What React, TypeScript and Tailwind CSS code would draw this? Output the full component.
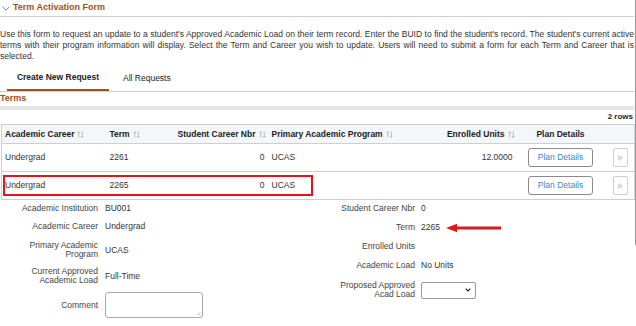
import React from 'react';

const brown = 'text-[#a0501e]';

const SortIcon: React.FC = () => (
  <svg width="7" height="7" viewBox="0 0 8 8" className="ml-[3px] inline-block text-[#a8a8a8]" fill="none" stroke="currentColor" strokeWidth="0.9">
    <path d="M2 7.5V0.8M0.6 2.2L2 0.8L3.4 2.2" />
    <path d="M6 0.5V7.2M4.6 5.8L6 7.2L7.4 5.8" />
  </svg>
);

const PlanButtons: React.FC = () => (
  <>
    <td className="text-center align-middle">
      <button className="h-[19px] w-[65px] rounded-[3px] border border-[#8a8a8a] bg-white text-[8.5px] text-[#3a86c8]">
        Plan Details
      </button>
    </td>
    <td className="align-middle">
      <button className="ml-[9px] flex h-[19px] w-[15px] items-center justify-center rounded-[2px] border border-[#cfcfcf] bg-white">
        <svg width="5" height="6" viewBox="0 0 5 6" fill="none" stroke="#b0b0b0" strokeWidth="0.8">
          <path d="M0.8 0.7L4.2 3L0.8 5.3Z" />
        </svg>
      </button>
    </td>
  </>
);

const App: React.FC = () => {
  const rows = [
    { career: 'Undergrad', term: '2261', nbr: '0', program: 'UCAS', units: '12.0000' },
    { career: 'Undergrad', term: '2265', nbr: '0', program: 'UCAS', units: '' },
  ];

  return (
    <div
      className="relative h-[326px] w-[636px] overflow-hidden bg-white text-[8.5px] text-[#333]"
      style={{ fontFamily: '"Liberation Sans", Arial, sans-serif' }}
    >
      {/* scroll edge */}
      <div className="absolute right-0 top-0 h-[245px] w-px bg-[#9a9a9a]" />

      <div className="w-[634px]">
        {/* header */}
        <div className="flex h-[17px] items-center border-b border-[#cfcfcf]">
          <svg width="8" height="5" viewBox="0 0 8 5" className="ml-[2px] mr-[3px]" fill="none" stroke="#777" strokeWidth="0.9">
            <path d="M0.5 0.7L4 4.2L7.5 0.7" />
          </svg>
          <span className={`text-[9px] font-bold ${brown}`}>Term Activation Form</span>
        </div>

        {/* description */}
        <div className="mt-[12px] leading-[11px] text-[#333]">
          <div className="text-justify [text-align-last:justify]">
            Use this form to request an update to a student's Approved Academic Load on their term record. Enter the BUID to find the student's record. The student's current active
          </div>
          <div className="text-justify [text-align-last:justify]">
            terms with their program information will display. Select the Term and Career you wish to update. Users will need to submit a form for each Term and Career that is
          </div>
          <div>selected.</div>
        </div>

        {/* tabs */}
        <div className="mt-[4px] flex border-b border-[#cfcfcf]">
          <div className="ml-[7px] flex h-[25px] w-[102px] items-center justify-center border-b-2 border-[#a0501e] font-bold text-[#222]">
            Create New Request
          </div>
          <div className="ml-[14px] flex h-[25px] items-center text-[#222]">All Requests</div>
        </div>

        {/* terms */}
        <div className={`flex h-[14px] items-center text-[9px] font-bold ${brown}`}>Terms</div>
        <div className="h-[4px] bg-[#e6e6e6]" />
        <div className="flex h-[14px] items-center justify-end pr-[1px] text-[8px] font-bold text-[#222]">2 rows</div>

        {/* table */}
        <table className="ml-px w-[633px] table-fixed border-collapse">
          <colgroup>
            <col className="w-[105px]" />
            <col className="w-[66px]" />
            <col className="w-[96px]" />
            <col className="w-[152px]" />
            <col className="w-[97px]" />
            <col className="w-[86px]" />
            <col className="w-[31px]" />
          </colgroup>
          <thead>
            <tr className="h-[19px] border border-[#cfcfcf] bg-[#f3f7f9] font-bold text-[#222]">
              <th className="pl-[3px] text-left font-bold">Academic Career<SortIcon /></th>
              <th className="pl-[3px] text-left font-bold">Term<SortIcon /></th>
              <th className="pr-[3px] text-right font-bold">Student Career Nbr<SortIcon /></th>
              <th className="pl-[3px] text-left font-bold">Primary Academic Program<SortIcon /></th>
              <th className="pr-[3px] text-right font-bold">Enrolled Units<SortIcon /></th>
              <th className="text-center font-bold">Plan Details</th>
              <th />
            </tr>
          </thead>
          <tbody>
            {rows.map((r, i) => (
              <tr key={i} className="relative h-[28px] border border-[#cfcfcf]">
                <td className="relative pl-[3px]">
                  {i === 1 && (
                    <div className="absolute left-[1px] top-[3px] h-[21px] w-[310px] border-2 border-[#e0141e]" />
                  )}
                  {r.career}
                </td>
                <td className="pl-[3px]">{r.term}</td>
                <td className="pr-[4px] text-right">{r.nbr}</td>
                <td className="pl-[3px]">{r.program}</td>
                <td className="pr-[5px] text-right">{r.units}</td>
                <PlanButtons />
              </tr>
            ))}
          </tbody>
        </table>

        {/* details */}
        <div className="-mt-px flex">
          <div className="w-[320px]">
            <div className="flex h-[18px] items-center">
              <div className="w-[98px] text-right text-[#444]">Academic Institution</div>
              <div className="ml-[7px]">BU001</div>
            </div>
            <div className="flex h-[18px] items-center">
              <div className="w-[98px] text-right text-[#444]">Academic Career</div>
              <div className="ml-[7px]">Undergrad</div>
            </div>
            <div className="flex h-[30px] items-center">
              <div className="w-[98px] text-right leading-[9.5px] text-[#444]">Primary Academic<br />Program</div>
              <div className="ml-[7px]">UCAS</div>
            </div>
            <div className="flex h-[22px] items-center">
              <div className="w-[98px] text-right leading-[9.5px] text-[#444]">Current Approved<br />Academic Load</div>
              <div className="ml-[7px]">Full-Time</div>
            </div>
            <div className="flex items-center pt-[5px]">
              <div className="w-[98px] text-right text-[#444]">Comment</div>
              <div className="relative ml-[7px] h-[26px] w-[98px] rounded-[3px] border border-[#a8a8a8]">
                <svg width="5" height="5" viewBox="0 0 5 5" className="absolute bottom-[1px] right-[1px]" stroke="#999" strokeWidth="0.6">
                  <path d="M1 4.5L4.5 1M2.8 4.5L4.5 2.8" />
                </svg>
              </div>
            </div>
          </div>

          <div className="w-[314px]">
            <div className="flex h-[19px] items-center">
              <div className="w-[95px] text-right text-[#444]">Student Career Nbr</div>
              <div className="ml-[6px]">0</div>
            </div>
            <div className="flex h-[19px] items-center">
              <div className="w-[95px] text-right text-[#444]">Term</div>
              <div className="ml-[6px]">2265</div>
              <svg width="56" height="10" viewBox="0 0 56 10" className="ml-[6px]">
                <path d="M0 5L11 0.8V3.6H55V6.4H11V9.2Z" fill="#dc1a1a" />
              </svg>
            </div>
            <div className="flex h-[19px] items-center">
              <div className="w-[95px] text-right text-[#444]">Enrolled Units</div>
            </div>
            <div className="flex h-[19px] items-center">
              <div className="w-[95px] text-right text-[#444]">Academic Load</div>
              <div className="ml-[6px]">No Units</div>
            </div>
            <div className="flex h-[30px] items-center">
              <div className="w-[95px] text-right leading-[9.5px] text-[#444]">Proposed Approved<br />Acad Load</div>
              <div className="ml-[6px] flex h-[17px] w-[55px] items-center justify-end rounded-[2px] border border-[#9a9a9a] pr-[4px]">
                <svg width="6" height="4" viewBox="0 0 6 4" fill="none" stroke="#222" strokeWidth="1.2">
                  <path d="M0.7 0.7L3 3L5.3 0.7" />
                </svg>
              </div>
            </div>
          </div>
        </div>
      </div>
    </div>
  );
};

export default App;
